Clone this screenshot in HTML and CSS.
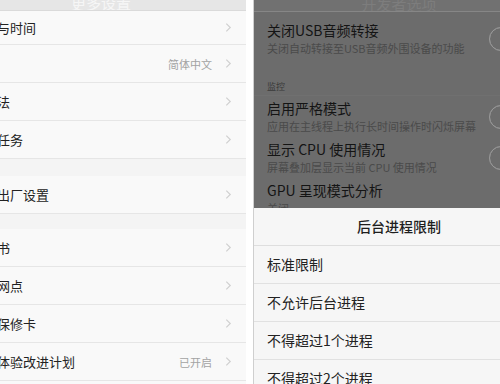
FILE: index.html
```html
<!DOCTYPE html>
<html lang="zh-CN">
<head>
    <meta charset="UTF-8">
    <meta name="viewport" content="width=device-width, initial-scale=1.0">
    <title>设置</title>
    <link rel="stylesheet" href="styles.css">
</head>
<body>
    <div class="screens">

        <!-- Pantalla izquierda: ajustes generales -->
        <div class="phone-wrap">
            <div class="phone settings">
                <div class="topbar"><span class="topbar-title">更多设置</span></div>

                <div class="group group-a">
                    <div class="row row-first">
                        <span class="label">日期与时间</span>
                        <svg class="chev" viewBox="0 0 8 12"><polyline points="1.5,1.5 6,6 1.5,10.5"/></svg>
                    </div>
                    <div class="row">
                        <span class="label">语言</span>
                        <span class="value">简体中文</span>
                        <svg class="chev" viewBox="0 0 8 12"><polyline points="1.5,1.5 6,6 1.5,10.5"/></svg>
                    </div>
                    <div class="row">
                        <span class="label">输入法</span>
                        <svg class="chev" viewBox="0 0 8 12"><polyline points="1.5,1.5 6,6 1.5,10.5"/></svg>
                    </div>
                    <div class="row">
                        <span class="label">定时任务</span>
                        <svg class="chev" viewBox="0 0 8 12"><polyline points="1.5,1.5 6,6 1.5,10.5"/></svg>
                    </div>
                </div>

                <div class="group">
                    <div class="row">
                        <span class="label">恢复出厂设置</span>
                        <svg class="chev" viewBox="0 0 8 12"><polyline points="1.5,1.5 6,6 1.5,10.5"/></svg>
                    </div>
                </div>

                <div class="group">
                    <div class="row">
                        <span class="label">说明书</span>
                        <svg class="chev" viewBox="0 0 8 12"><polyline points="1.5,1.5 6,6 1.5,10.5"/></svg>
                    </div>
                    <div class="row">
                        <span class="label">服务网点</span>
                        <svg class="chev" viewBox="0 0 8 12"><polyline points="1.5,1.5 6,6 1.5,10.5"/></svg>
                    </div>
                    <div class="row">
                        <span class="label">电子保修卡</span>
                        <svg class="chev" viewBox="0 0 8 12"><polyline points="1.5,1.5 6,6 1.5,10.5"/></svg>
                    </div>
                    <div class="row">
                        <span class="label">用户体验改进计划</span>
                        <span class="value">已开启</span>
                        <svg class="chev" viewBox="0 0 8 12"><polyline points="1.5,1.5 6,6 1.5,10.5"/></svg>
                    </div>
                    <div class="row">
                        <span class="label">关于手机</span>
                        <svg class="chev" viewBox="0 0 8 12"><polyline points="1.5,1.5 6,6 1.5,10.5"/></svg>
                    </div>
                </div>
            </div>
        </div>

        <!-- Pantalla derecha: opciones de desarrollador con menú inferior -->
        <div class="phone-wrap phone-wrap-right">
            <div class="phone dev">
                <div class="dev-content">
                    <div class="topbar topbar-dark"><span class="topbar-title">开发者选项</span></div>

                    <div class="item item-first">
                        <div class="item-text">
                            <div class="item-title">关闭USB音频转接</div>
                            <div class="item-sub">关闭自动转接至USB音频外围设备的功能</div>
                        </div>
                        <div class="toggle"><span class="knob"></span></div>
                    </div>

                    <div class="section">监控</div>

                    <div class="item">
                        <div class="item-text">
                            <div class="item-title">启用严格模式</div>
                            <div class="item-sub">应用在主线程上执行长时间操作时闪烁屏幕</div>
                        </div>
                        <div class="toggle"><span class="knob"></span></div>
                    </div>
                    <div class="item">
                        <div class="item-text">
                            <div class="item-title">显示 CPU 使用情况</div>
                            <div class="item-sub">屏幕叠加层显示当前 CPU 使用情况</div>
                        </div>
                        <div class="toggle"><span class="knob"></span></div>
                    </div>
                    <div class="item">
                        <div class="item-text">
                            <div class="item-title">GPU 呈现模式分析</div>
                            <div class="item-sub">关闭</div>
                        </div>
                    </div>
                </div>

                <div class="sheet">
                    <div class="sheet-title">后台进程限制</div>
                    <div class="sheet-option">标准限制</div>
                    <div class="sheet-option">不允许后台进程</div>
                    <div class="sheet-option">不得超过1个进程</div>
                    <div class="sheet-option">不得超过2个进程</div>
                </div>
            </div>
        </div>

    </div>
</body>
</html>
```

FILE: styles.css
```css
body {
    margin: 0;
    padding: 0;
    background-color: #fff;
    font-family: "Noto Sans CJK SC", "Noto Sans", sans-serif;
    height: 384px;
    overflow: hidden;
}

.screens {
    display: flex;
    gap: 7px;
    height: 384px;
}

/* Cada pantalla se recorta: el teléfono es más ancho que la columna */
.phone-wrap {
    width: 246px;
    display: flex;
    justify-content: flex-end;
    overflow: hidden;
}

.phone-wrap-right {
    flex: 1;
    justify-content: flex-start;
}

.phone {
    width: 290px;
    flex-shrink: 0;
}

/* ---------- Ajustes ---------- */
.settings {
    background-color: #f4f4f4;
}

.topbar {
    height: 10px;
    background-color: #e6e6e6;
    border-bottom: 1px solid #dadada;
    display: flex;
    align-items: flex-end;
    justify-content: center;
    overflow: hidden;
}

.topbar-title {
    font-size: 15px;
    line-height: 14px;
    color: #f6f6f6;
}

.group {
    background-color: #f9f9f9;
    margin-bottom: 15px;
}

.group-a {
    margin-bottom: 17px;
}

.row {
    height: 37px;
    border-bottom: 1px solid #e6e6e6;
    display: flex;
    align-items: center;
    padding: 0 14px 0 15px;
}

.row-first {
    height: 33px;
}

.label {
    flex: 1;
    font-size: 13px;
    color: #222;
    white-space: nowrap;
}

.value {
    font-size: 11px;
    color: #a3a3a3;
    margin-right: 13px;
}

.chev {
    width: 7px;
    height: 11px;
    fill: none;
    stroke: #cfcfcf;
    stroke-width: 1.3;
}

/* ---------- Opciones de desarrollador ---------- */
.dev {
    display: flex;
    flex-direction: column;
    height: 384px;
    border-left: 1px solid #cfcfcf;
}

.dev-content {
    height: 208px;
    flex-shrink: 0;
    overflow: hidden;
    background-color: #6c6c6c;
}

.topbar-dark {
    height: 11px;
    background-color: #717171;
    border-bottom: 1px solid #868686;
}

.topbar-dark .topbar-title {
    color: #7d7d7d;
}

.item {
    display: flex;
    align-items: center;
    padding: 3px 11px 3px 13px;
}

.item-first {
    margin-top: 6px;
}

.item-text {
    flex: 1;
    min-width: 0;
}

.item-title {
    font-size: 14px;
    line-height: 19px;
    color: #141414;
    white-space: nowrap;
}

.item-sub {
    font-size: 11px;
    line-height: 16px;
    color: #4a4a4a;
    white-space: nowrap;
}

.section {
    font-size: 9px;
    line-height: 12px;
    color: #3a3a3a;
    padding: 22px 13px 2px;
    border-bottom: 1px solid #707070;
}

.toggle {
    width: 44px;
    height: 24px;
    border: 1px solid #828282;
    border-radius: 13px;
    box-sizing: border-box;
    display: flex;
    align-items: center;
}

.knob {
    width: 24px;
    height: 24px;
    border: 1.5px solid #999;
    border-radius: 50%;
    box-sizing: border-box;
    margin-left: -1px;
}

.sheet {
    flex: 1;
    overflow: hidden;
    background-color: #f6f6f6;
}

.sheet-title {
    height: 37px;
    line-height: 37px;
    text-align: center;
    font-size: 14px;
    font-weight: 500;
    color: #1e1e1e;
    border-bottom: 1px solid #dedede;
}

.sheet-option {
    height: 37px;
    line-height: 37px;
    padding-left: 13px;
    font-size: 14px;
    color: #222;
    border-bottom: 1px solid #e1e1e1;
}
```
